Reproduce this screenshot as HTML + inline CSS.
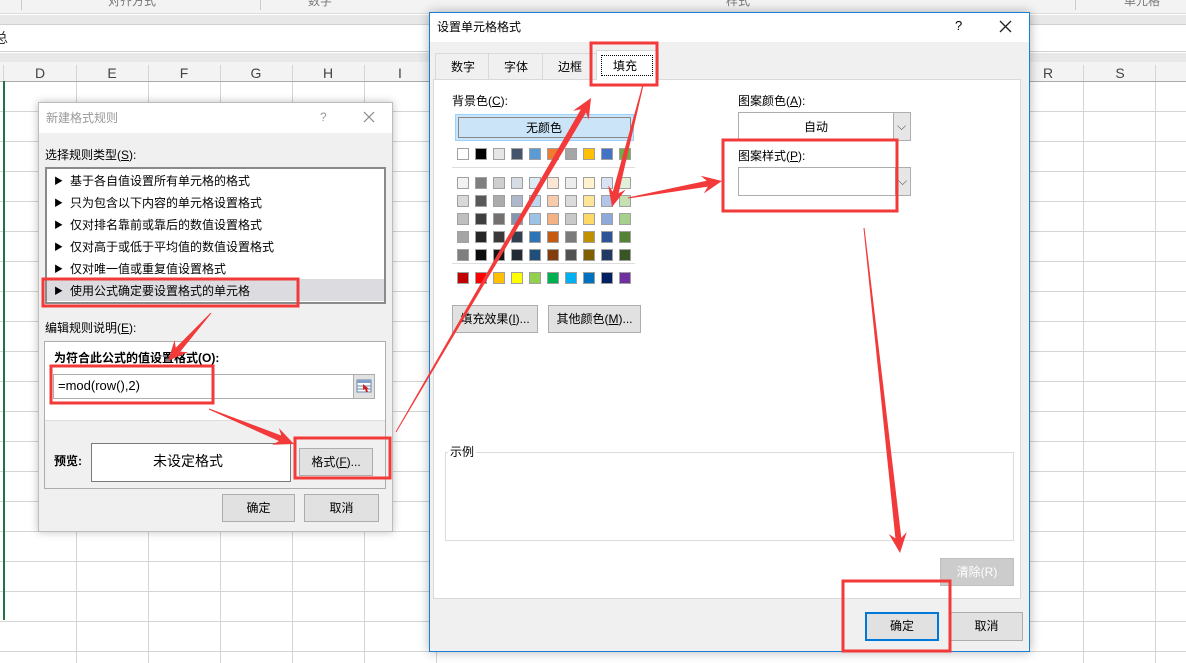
<!DOCTYPE html>
<html><head><meta charset="utf-8">
<style>
*{margin:0;padding:0;box-sizing:border-box}
body{width:1186px;height:663px;overflow:hidden;position:relative;background:#fff;font-family:"Liberation Sans","Noto Sans CJK SC",sans-serif;font-size:12px;color:#000}
.a{position:absolute}
.t{position:absolute;white-space:nowrap;font-size:12px;line-height:14px}
.btn{position:absolute;background:#e1e1e1;border:1px solid #adadad;text-align:center;font-size:12px}
.sw{position:absolute;width:12px;height:12px;border:1px solid #a0a0a0}
u{text-decoration:underline}
.tri{font-size:9px;vertical-align:1px;margin-right:7px}
</style></head><body>
<!-- excel background -->
<div class="a" style="left:0;top:0;width:1186px;height:14px;background:#f3f3f3;border-bottom:1px solid #dcdcdc"></div>
<div class="t" style="left:108px;top:-6px;color:#777">对齐方式</div>
<div class="t" style="left:308px;top:-6px;color:#777">数字</div>
<div class="t" style="left:726px;top:-6px;color:#777">样式</div>
<div class="t" style="left:1124px;top:-6px;color:#777">单元格</div>
<div class="a" style="left:21px;top:0;width:1px;height:10px;background:#ccc"></div>
<div class="a" style="left:260px;top:0;width:1px;height:10px;background:#ccc"></div>
<div class="a" style="left:1075px;top:0;width:1px;height:10px;background:#ccc"></div>
<div class="a" style="left:0;top:15px;width:1186px;height:10px;background:#e8e8e8;border-bottom:1px solid #d0d0d0"></div>
<div class="a" style="left:0;top:26px;width:1186px;height:26px;background:#fff;border-bottom:1px solid #d0d0d0"></div>
<div class="t" style="left:-6px;top:31px;font-size:14px;color:#333">总</div>
<div class="a" style="left:0;top:53px;width:1186px;height:9px;background:#e8e8e8"></div>
<svg class="a" style="left:0;top:62px" width="1186" height="601">
<g stroke="#d4d4d4" stroke-width="1">
<line x1="76.5" y1="0" x2="76.5" y2="601"/><line x1="148.5" y1="0" x2="148.5" y2="601"/><line x1="220.5" y1="0" x2="220.5" y2="601"/><line x1="292.5" y1="0" x2="292.5" y2="601"/><line x1="364.5" y1="0" x2="364.5" y2="601"/><line x1="436.5" y1="0" x2="436.5" y2="601"/>
<line x1="1083.5" y1="0" x2="1083.5" y2="601"/><line x1="1155.5" y1="0" x2="1155.5" y2="601"/>
</g>
<g stroke="#d4d4d4">
<line x1="0" y1="49.5" x2="1186" y2="49.5"/><line x1="0" y1="79.5" x2="1186" y2="79.5"/><line x1="0" y1="109.5" x2="1186" y2="109.5"/><line x1="0" y1="139.5" x2="1186" y2="139.5"/><line x1="0" y1="169.5" x2="1186" y2="169.5"/><line x1="0" y1="199.5" x2="1186" y2="199.5"/><line x1="0" y1="229.5" x2="1186" y2="229.5"/><line x1="0" y1="259.5" x2="1186" y2="259.5"/><line x1="0" y1="289.5" x2="1186" y2="289.5"/><line x1="0" y1="319.5" x2="1186" y2="319.5"/><line x1="0" y1="349.5" x2="1186" y2="349.5"/><line x1="0" y1="379.5" x2="1186" y2="379.5"/><line x1="0" y1="409.5" x2="1186" y2="409.5"/><line x1="0" y1="439.5" x2="1186" y2="439.5"/><line x1="0" y1="469.5" x2="1186" y2="469.5"/><line x1="0" y1="499.5" x2="1186" y2="499.5"/><line x1="0" y1="529.5" x2="1186" y2="529.5"/><line x1="0" y1="559.5" x2="1186" y2="559.5"/><line x1="0" y1="589.5" x2="1186" y2="589.5"/>
</g>
<rect x="0" y="0" width="1186" height="19" fill="#f3f3f3"/>
<line x1="0" y1="19.5" x2="1186" y2="19.5" stroke="#ababab"/>
<g stroke="#d4d4d4"><line x1="76.5" y1="3" x2="76.5" y2="19"/><line x1="148.5" y1="3" x2="148.5" y2="19"/><line x1="220.5" y1="3" x2="220.5" y2="19"/><line x1="292.5" y1="3" x2="292.5" y2="19"/><line x1="364.5" y1="3" x2="364.5" y2="19"/><line x1="1083.5" y1="3" x2="1083.5" y2="19"/><line x1="1155.5" y1="3" x2="1155.5" y2="19"/><line x1="3.5" y1="3" x2="3.5" y2="19"/></g>
<g font-family="Liberation Sans" font-size="14" fill="#444" text-anchor="middle">
<text x="40" y="16">D</text><text x="112" y="16">E</text><text x="184" y="16">F</text><text x="256" y="16">G</text><text x="328" y="16">H</text><text x="400" y="16">I</text><text x="1048" y="16">R</text><text x="1120" y="16">S</text></g>
<line x1="4" y1="19" x2="4" y2="558" stroke="#217346" stroke-width="2"/>
</svg>

<!-- left dialog -->
<div class="a" style="left:38px;top:102px;width:355px;height:430px;background:#f0f0f0;border:1px solid #bcbcbc;box-shadow:0 0 8px rgba(0,0,0,.25)"></div>
<div class="a" style="left:39px;top:103px;width:353px;height:30px;background:#fff"></div>
<div class="t" style="left:46px;top:111px;color:#999">新建格式规则</div>
<div class="t" style="left:320px;top:110px;color:#999">?</div>
<svg class="a" style="left:363px;top:111px" width="12" height="12"><path d="M1 1L11 11M11 1L1 11" stroke="#888" stroke-width="1.2"/></svg>
<div class="t" style="left:45px;top:148px">选择规则类型(<u>S</u>):</div>
<div class="a" style="left:45px;top:167px;width:341px;height:137px;background:#fff;border:2px solid #8a8a8a"></div>
<div class="a" style="left:47px;top:279px;width:337px;height:22px;background:#dcdce0"></div>
<div class="t" style="left:54px;top:174px"><span class="tri">▶</span>基于各自值设置所有单元格的格式</div>
<div class="t" style="left:54px;top:196px"><span class="tri">▶</span>只为包含以下内容的单元格设置格式</div>
<div class="t" style="left:54px;top:218px"><span class="tri">▶</span>仅对排名靠前或靠后的数值设置格式</div>
<div class="t" style="left:54px;top:240px"><span class="tri">▶</span>仅对高于或低于平均值的数值设置格式</div>
<div class="t" style="left:54px;top:262px"><span class="tri">▶</span>仅对唯一值或重复值设置格式</div>
<div class="t" style="left:54px;top:284px"><span class="tri">▶</span>使用公式确定要设置格式的单元格</div>
<div class="t" style="left:45px;top:321px">编辑规则说明(<u>E</u>):</div>
<div class="a" style="left:44px;top:341px;width:342px;height:148px;background:#fff;border:1px solid #adadad"></div>
<div class="a" style="left:45px;top:420px;width:340px;height:68px;background:#f0f0f0;border-top:1px solid #ddd"></div>
<div class="t" style="left:54px;top:351px;font-weight:bold">为符合此公式的值设置格式(O):</div>
<div class="a" style="left:53px;top:374px;width:301px;height:25px;background:#fff;border:1px solid #adadad"></div>
<div class="t" style="left:58px;top:379px;font-size:13px">=mod(row(),2)</div>
<div class="a" style="left:353px;top:374px;width:22px;height:25px;background:#e1e1e1;border:1px solid #adadad"></div>
<svg class="a" style="left:356px;top:379px" width="16" height="14"><rect x="1" y="1" width="14" height="12" fill="#fff" stroke="#6a8ab0"/><rect x="1" y="1" width="14" height="3" fill="#7fa0c8"/><line x1="1" y1="7" x2="15" y2="7" stroke="#6a8ab0"/><line x1="1" y1="10" x2="15" y2="10" stroke="#6a8ab0"/><path d="M7 5l6 5-2 0 1 3-2 0-1-3-2 1z" fill="#d02020"/></svg>
<div class="t" style="left:54px;top:454px;font-weight:bold">预览:</div>
<div class="a" style="left:91px;top:443px;width:200px;height:39px;background:#fff;border:1px solid #7a7a7a"></div>
<div class="t" style="left:153px;top:454px;font-size:14px">未设定格式</div>
<div class="btn" style="left:299px;top:448px;width:74px;height:28px;line-height:26px">格式(<u>F</u>)...</div>
<div class="btn" style="left:222px;top:494px;width:73px;height:28px;line-height:26px">确定</div>
<div class="btn" style="left:304px;top:494px;width:75px;height:28px;line-height:26px">取消</div>

<!-- right dialog -->
<div class="a" style="left:429px;top:12px;width:601px;height:640px;background:#f0f0f0;border:1px solid #1a7fd4;box-shadow:0 0 10px rgba(0,0,0,.3)"></div>
<div class="a" style="left:430px;top:13px;width:599px;height:29px;background:#fff"></div>
<div class="t" style="left:437px;top:20px">设置单元格格式</div>
<div class="t" style="left:955px;top:19px;font-size:13px">?</div>
<svg class="a" style="left:999px;top:20px" width="13" height="13"><path d="M1 1L12 12M12 1L1 12" stroke="#222" stroke-width="1.3"/></svg>
<div class="a" style="left:433px;top:79px;width:588px;height:520px;background:#fff;border:1px solid #d9d9d9"></div>
<div class="a" style="left:435px;top:53px;width:54px;height:26px;border:1px solid #d9d9d9;border-bottom:none;background:#f0f0f0"></div>
<div class="a" style="left:488px;top:53px;width:55px;height:26px;border:1px solid #d9d9d9;border-bottom:none;background:#f0f0f0"></div>
<div class="a" style="left:542px;top:53px;width:55px;height:26px;border:1px solid #d9d9d9;border-bottom:none;background:#f0f0f0"></div>
<div class="a" style="left:596px;top:50px;width:63px;height:30px;border:1px solid #d9d9d9;border-bottom:none;background:#fff"></div>
<div class="a" style="left:601px;top:55px;width:52px;height:21px;border:1px dotted #000"></div>
<div class="t" style="left:451px;top:60px">数字</div>
<div class="t" style="left:504px;top:60px">字体</div>
<div class="t" style="left:558px;top:60px">边框</div>
<div class="t" style="left:613px;top:59px">填充</div>
<div class="t" style="left:452px;top:94px">背景色(<u>C</u>):</div>
<div class="a" style="left:455px;top:114px;width:179px;height:27px;background:#cce4f7;border:1px solid #99d1ff"></div>
<div class="a" style="left:458px;top:117px;width:173px;height:21px;border:1px solid #888"></div>
<div class="t" style="left:526px;top:121px">无颜色</div>
<div class="a" style="left:452px;top:167px;width:183px;height:1px;background:#ddd"></div>
<div class="a" style="left:452px;top:263px;width:183px;height:1px;background:#ddd"></div>
<div id="sw"></div>
<div class="btn" style="left:452px;top:305px;width:86px;height:28px;line-height:26px">填充效果(<u>I</u>)...</div>
<div class="btn" style="left:548px;top:305px;width:93px;height:28px;line-height:26px">其他颜色(<u>M</u>)...</div>
<div class="t" style="left:738px;top:94px">图案颜色(<u>A</u>):</div>
<div class="a" style="left:738px;top:112px;width:173px;height:29px;background:#fff;border:1px solid #adadad"></div>
<div class="a" style="left:893px;top:112px;width:18px;height:29px;background:#e6e6e6;border:1px solid #adadad"></div>
<div class="t" style="left:897px;top:119px;color:#555">⌵</div>
<div class="t" style="left:804px;top:120px">自动</div>
<div class="t" style="left:738px;top:149px">图案样式(<u>P</u>):</div>
<div class="a" style="left:738px;top:167px;width:173px;height:29px;background:#fff;border:1px solid #adadad"></div>
<div class="a" style="left:895px;top:167px;width:16px;height:29px;background:#e6e6e6;border:1px solid #adadad"></div>
<div class="t" style="left:898px;top:174px;color:#555">⌵</div>
<div class="a" style="left:445px;top:452px;width:569px;height:89px;border:1px solid #dcdcdc"></div>
<div class="t" style="left:448px;top:445px;background:#fff;padding:0 2px">示例</div>
<div class="btn" style="left:940px;top:558px;width:74px;height:28px;line-height:26px;background:#ccc;border-color:#bfbfbf;color:#fff">清除(R)</div>
<div class="btn" style="left:865px;top:612px;width:74px;height:29px;line-height:25px;border:2px solid #0078d7">确定</div>
<div class="btn" style="left:950px;top:612px;width:73px;height:29px;line-height:27px">取消</div>

<!-- red annotations -->
<svg class="a" style="left:0;top:0" width="1186" height="663">
<g fill="none" stroke="#f23a3a" stroke-width="3">
<rect x="43" y="279" width="255" height="27"/>
<rect x="51" y="366" width="162" height="37"/>
<rect x="295" y="438" width="95" height="40"/>
<rect x="591" y="43" width="66" height="42"/>
<rect x="723" y="140" width="174" height="71"/>
<rect x="843" y="581" width="107" height="70"/>
</g>
<g id="arr" fill="#f23a3a"></g>
</svg>
<script>
var rows=[
["#ffffff","#000000","#e7e6e6","#44546a","#5b9bd5","#ed7d31","#a5a5a5","#ffc000","#4472c4","#70ad47"],
["#f2f2f2","#7f7f7f","#d0cece","#d6dce4","#deebf6","#fbe5d5","#ededed","#fff2cc","#dae3f3","#e2efd9"],
["#d8d8d8","#595959","#aeabab","#adb9ca","#bdd7ee","#f7cbac","#dbdbdb","#fee599","#b4c6e7","#c5e0b3"],
["#bfbfbf","#3f3f3f","#757070","#8496b0","#9cc3e5","#f4b183","#c9c9c9","#ffd965","#8eaadb","#a8d08d"],
["#a5a5a5","#262626","#3a3838","#323f4f","#2e75b5","#c55a11","#7b7b7b","#bf9000","#2f5496","#538135"],
["#7f7f7f","#0c0c0c","#171616","#222a35","#1e4e79","#833c0b","#525252","#7f6000","#1f3864","#375623"],
["#c00000","#ff0000","#ffc000","#ffff00","#92d050","#00b050","#00b0f0","#0070c0","#002060","#7030a0"]];
var ys=[148,177,195,213,231,249,272],h="";
for(var r=0;r<7;r++)for(var c=0;c<10;c++)h+='<div class="sw" style="left:'+(457+c*18)+'px;top:'+ys[r]+'px;background:'+rows[r][c]+'"></div>';
document.getElementById("sw").innerHTML=h;
var A=[[211,313,168,361],[209,409,294,444],[396,432,591,98],[643,85,612,207],[628,198,722,181],[864,228,900,553]];
var s="";
A.forEach(function(a){var dx=a[2]-a[0],dy=a[3]-a[1],L=Math.sqrt(dx*dx+dy*dy),ux=dx/L,uy=dy/L,nx=-uy,ny=ux;
var hl=20,hw=9,sw=3,bx=a[2]-ux*hl,by=a[3]-uy*hl,nx2=a[2]-ux*(hl-5),ny2=a[3]-uy*(hl-5);
var p=[[a[0]+nx*0.5,a[1]+ny*0.5],[nx2+nx*sw,ny2+ny*sw],[bx+nx*hw,by+ny*hw],[a[2],a[3]],[bx-nx*hw,by-ny*hw],[nx2-nx*sw,ny2-ny*sw],[a[0]-nx*0.5,a[1]-ny*0.5]];
s+='<path d="M'+p.map(function(q){return q[0].toFixed(1)+' '+q[1].toFixed(1)}).join(' L')+' Z"/>';});
document.getElementById("arr").innerHTML=s;
</script>
</body></html>
